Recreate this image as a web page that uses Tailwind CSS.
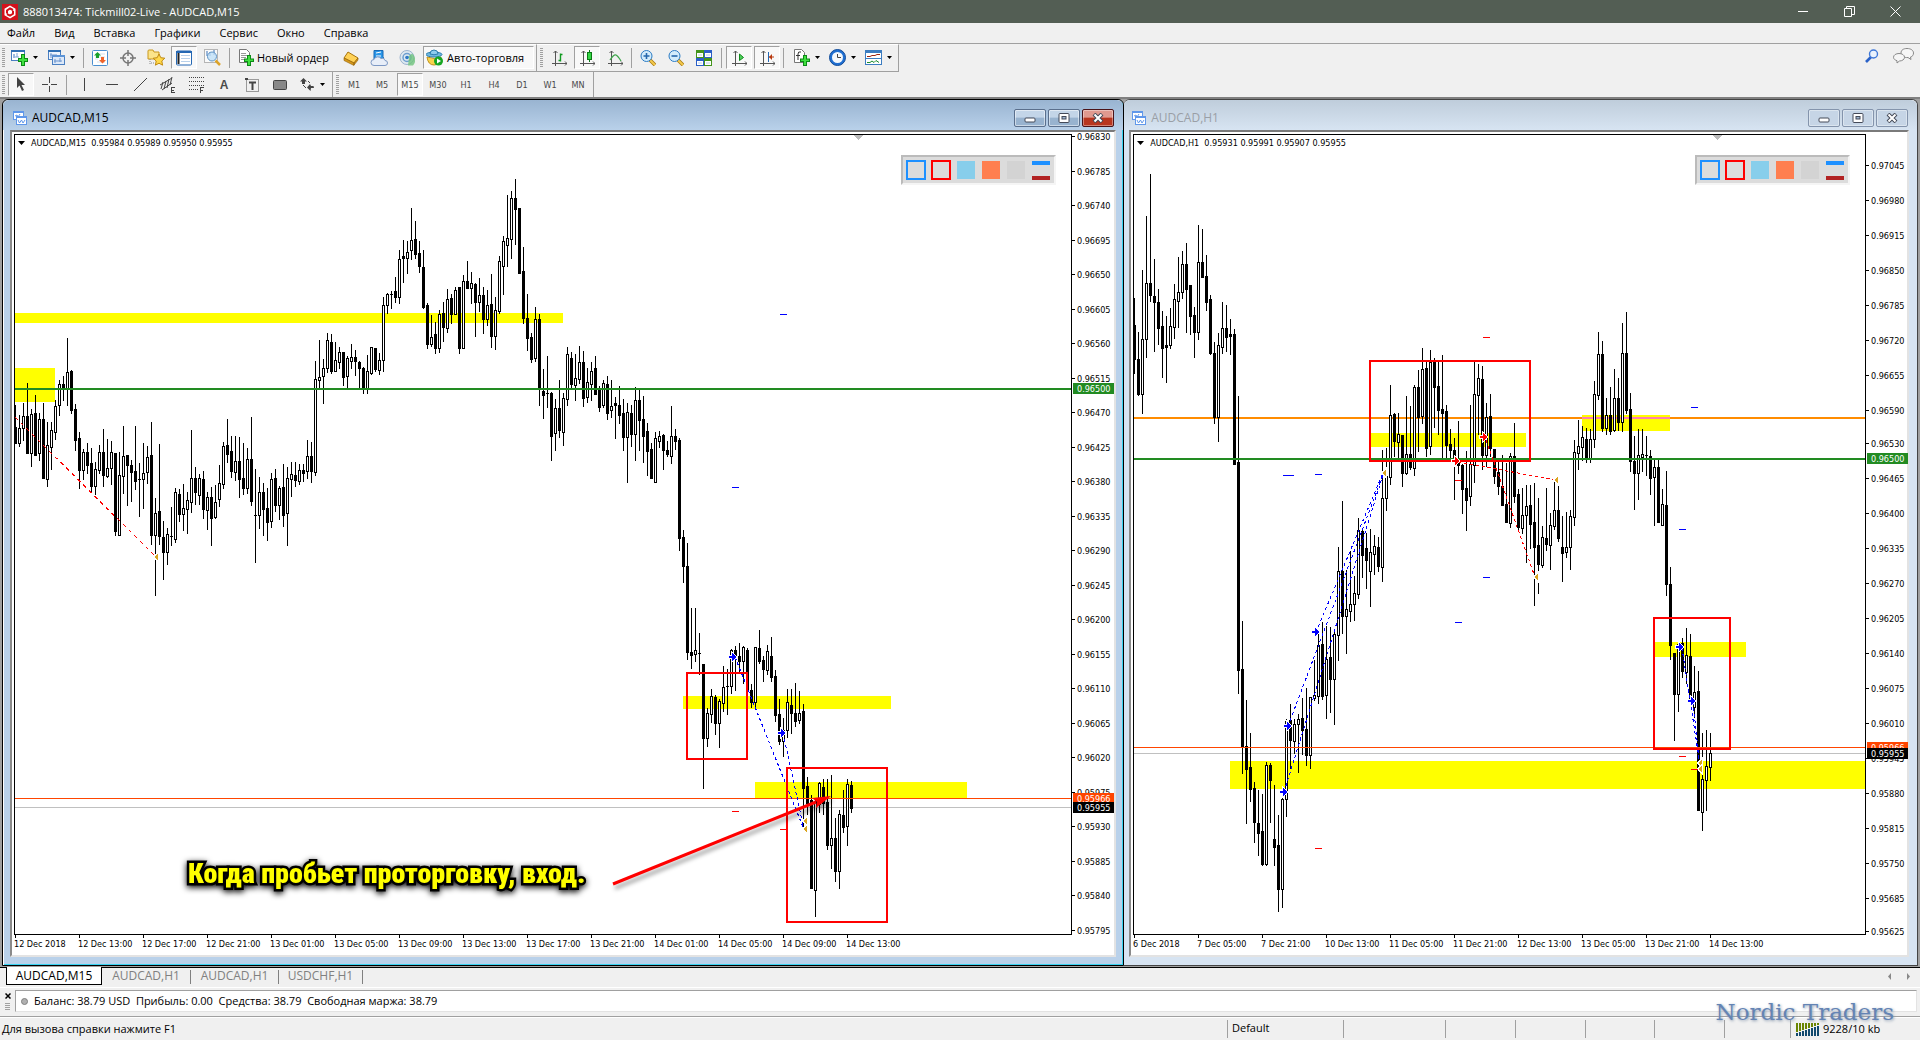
<!DOCTYPE html>
<html lang="ru">
<head>
  <meta charset="UTF-8" />
  <meta name="viewport" content="width=device-width, initial-scale=1.0"/>
  <title>888013474: Tickmill02-Live - AUDCAD,M15</title>
  <script src="https://cdn.jsdelivr.net/npm/@tailwindcss/browser@4"></script>
</head>
<body class="h-screen flex flex-col overflow-hidden bg-[#f0f0f0] text-black text-[12px] leading-4 font-['Open_Sans','Noto_Sans',sans-serif]">

  <!-- Title bar -->
  <header class="h-[23px] shrink-0 flex items-center bg-[#535e54] text-white pl-0.5 pr-0.5">
    <svg class="size-4" viewBox="0 0 16 16"><rect width="16" height="16" fill="#d4111b"/><path d="M8 1.500l5.500 3.200v6.600L8 14.500l-5.500-3.200V4.700z" fill="#fff"/><path d="M5 9.500V6.500L8 4.500l3 1.500M11 6.800v3L8 11.600l-3-1.500" fill="none" stroke="#d4111b" stroke-width="2"/></svg>
    <h1 class="ml-[5px] text-[11px]">888013474: Tickmill02-Live - AUDCAD,M15</h1>
    <div class="ml-auto flex h-full">
      <button aria-label="Minimize" class="w-[46px] flex items-center justify-center"><svg class="size-[11px]" viewBox="0 0 11 11"><path d="M0 5.500h10" stroke="#fff"/></svg></button>
      <button aria-label="Restore" class="w-[46px] flex items-center justify-center"><svg class="size-[11px]" viewBox="0 0 11 11" fill="none" stroke="#fff"><path d="M.5 2.500h7v8h-7zM2.500 2.500v-2h8v8h-3"/></svg></button>
      <button aria-label="Close" class="w-[46px] flex items-center justify-center"><svg class="size-[11px]" viewBox="0 0 11 11" stroke="#fff"><path d="M.5.5l10 10M10.500.5l-10 10"/></svg></button>
    </div>
  </header>

  <!-- Menu -->
  <nav class="h-5 shrink-0 flex items-center gap-[19px] pl-[7px] text-[11px]">
    <button>Файл</button>
    <button>Вид</button>
    <button>Вставка</button>
    <button>Графики</button>
    <button>Сервис</button>
    <button>Окно</button>
    <button>Справка</button>
  </nav>

  <!-- Main toolbar -->
  <div class="h-[29px] shrink-0 flex border-t border-[#a0a0a0] text-[11px]">
    <div class="flex items-center border-t border-b border-t-white border-b-[#a0a0a0] w-[537px] border-r border-r-[#a0a0a0] pl-0.5 pb-px">
      <i class="w-[3px] h-5 bg-[repeating-linear-gradient(#a0a0a0_0_1px,transparent_1px_2px)]"></i>
      <button aria-label="New chart" class="h-[23px] ml-[3px] px-[3px] flex items-center gap-[5px]">
        <svg class="w-[17px] h-[17px]" viewBox="0 0 17 17"><rect x=".5" y="1.500" width="13" height="10" fill="#fff" stroke="#4a7fc1"/><path d="M0 2h14" stroke="#2f6fb5" stroke-width="2"/><path d="M3 5v4M2 6h2M2 8h6M6 4v4" stroke="#7aa2d6"/><path d="M10 5h4v4h3v4h-3v4h-4v-4H7V9h3z" fill="#0c8a16"/><path d="M11 6h2v4h3v2h-3v4h-2v-4H8v-2h3z" fill="#3fe03f"/></svg>
        <svg class="w-[5px] h-[3px]" viewBox="0 0 5 3"><path d="M0 0h5L2.500 3z"/></svg>
      </button>
      <button aria-label="Profiles" class="h-[23px] ml-1 px-[3px] flex items-center gap-[5px]">
        <svg class="w-[17px] h-[17px]" viewBox="0 0 17 17"><rect x=".5" y="1.500" width="12" height="9" fill="#eef4fd" stroke="#4a7fc1"/><path d="M0 2h13" stroke="#2f6fb5" stroke-width="2"/><rect x="4.500" y="6.500" width="12" height="9" fill="#dce8f8" stroke="#4a7fc1"/><path d="M4 7h13" stroke="#5b93d6" stroke-width="2"/><path d="M3 4v5M2 6h7M7 10v4M6 12h8M12 9v4" stroke="#6a94cf"/></svg>
        <svg class="w-[5px] h-[3px]" viewBox="0 0 5 3"><path d="M0 0h5L2.500 3z"/></svg>
      </button>
      <i class="w-px h-5 bg-[#a0a0a0] ml-[5px] mr-[3px]"></i>
      <div class="flex gap-0.5">
        <button aria-label="Market watch" class="w-[26px] h-[23px] flex items-center justify-center"><svg class="size-4" viewBox="0 0 16 16"><rect x=".5" y=".5" width="15" height="15" rx="1" fill="#fff" stroke="#4a8fd0"/><path d="M3 4h10M3 7h10M5 12h8M3 9h3" stroke="#d5dfea"/><path d="M5.500 2L9 5.500H7V8H4V5.500H2z" fill="#16a02a"/><path d="M10.500 13.500L7 10h2V7h3v3h2z" fill="#f0642a"/></svg></button>
        <button aria-label="Data window" class="w-[26px] h-[23px] flex items-center justify-center"><svg class="size-4" viewBox="0 0 16 16" fill="none" stroke="#777" stroke-width="1.500"><circle cx="8" cy="8" r="5"/><path d="M8 0v6M8 10v6M0 8h6M10 8h6"/></svg></button>
        <button aria-label="Navigator" class="w-[26px] h-[23px] flex items-center justify-center"><svg class="w-[18px] h-[17px]" viewBox="0 0 18 17"><path d="M1 2q0-1 1-1h4l1 2h5v7H1z" fill="#fbe48a" stroke="#c9971c"/><path d="M3 10v6M4 14h4" stroke="#888" stroke-dasharray="1 1"/><path d="M12 5l1.800 3.700 4 .5-3 2.800.8 4.200-3.600-2-3.600 2 .8-4.200-3-2.800 4-.5z" fill="#ffd84a" stroke="#c08a10"/></svg></button>
        <button aria-label="Terminal" aria-pressed="true" class="w-[26px] h-[23px] flex items-center justify-center border border-t-[#a0a0a0] border-l-[#a0a0a0] border-b-white border-r-white bg-[#f8f8f8]"><svg class="size-4" viewBox="0 0 16 16"><rect x=".5" y="1" width="15" height="14" rx="1" fill="#fff" stroke="#2467b3"/><path d="M0 2h16" stroke="#2467b3" stroke-width="2"/><path d="M2.500 3v11" stroke="#222" stroke-width="2"/><path d="M5 5.500h9M5 8.500h9M5 11.500h9" stroke="#b8d0ea"/></svg></button>
        <button aria-label="Strategy tester" class="w-[26px] h-[23px] flex items-center justify-center"><svg class="w-[17px] h-[17px]" viewBox="0 0 17 17"><rect x=".5" y=".5" width="13" height="13" fill="#fafafa" stroke="#b5b5b5"/><path d="M3 2v5M6 3v4M10 1v5" stroke="#3a72b8"/><circle cx="8" cy="7.500" r="4.500" fill="#bfe0f7cc" stroke="#5f93c4"/><path d="M11.500 11.500l4.500 4.500" stroke="#dca32a" stroke-width="2.500"/></svg></button>
      </div>
      <i class="w-px h-5 bg-[#a0a0a0] ml-1"></i>
      <button class="h-[23px] w-[101px] ml-[5px] px-[3px] flex items-center gap-[3px] whitespace-nowrap">
        <svg class="w-[16px] h-[17px]" viewBox="0 0 16 17"><path d="M1.500.5h7l3 3v10h-10z" fill="#fff" stroke="#777"/><path d="M3 4.500h5M3 6.500h7M3 8.500h5M3 10.500h4" stroke="#999"/><path d="M9 6h4v3.500h3v3.500h-3v4H9v-4H6V9.500h3z" fill="#0c8a16"/><path d="M10 7h2v3.500h3V12h-3v4h-2v-4H7v-1.500h3z" fill="#3fe03f"/></svg>
        Новый ордер
      </button>
      <div class="flex gap-0.5 ml-0.5">
        <button aria-label="MetaEditor" class="w-[26px] h-[23px] flex items-center justify-center"><svg class="size-4" viewBox="0 0 16 16"><path d="M5 2l10 6-4 5L1 8z" fill="#ffd257" stroke="#a8740c"/><path d="M1 8l10 5v2.500L1 10.500zM11 13l4-5v2l-4 5z" fill="#d99a1a" stroke="#8f5f08" stroke-width=".6"/></svg></button>
        <button aria-label="VPS" class="w-[26px] h-[23px] flex items-center justify-center"><svg class="w-[18px] h-4" viewBox="0 0 18 16"><path d="M4 .5h9v6l1 3H4z" fill="#2a96e8" stroke="#1769b5"/><path d="M6 3l5-1M6 6h5" stroke="#fff"/><path d="M4 15.500a3 3 0 010-6 4 4 0 017-1 3 3 0 014 2 2.500 2.500 0 010 5z" fill="#e8eef8" stroke="#7d98c4"/></svg></button>
        <button aria-label="Signals" class="w-[26px] h-[23px] flex items-center justify-center"><svg class="size-4" viewBox="0 0 16 16" fill="none"><circle cx="8" cy="7.500" r="7" fill="#dfe9f0" stroke="#9ab3cf"/><circle cx="8" cy="7.500" r="4" stroke="#6d9fd0" stroke-width="1.500"/><path d="M8 7.500h2l-1 8h5a8 8 0 00-1-12" fill="#6fc37c" fill-opacity=".8"/><circle cx="8" cy="7.500" r="1.800" fill="#2d78c8"/></svg></button>
      </div>
      <button aria-pressed="true" class="h-[23px] w-[111px] ml-[3px] pl-0.5 flex items-center gap-[4px] whitespace-nowrap border border-t-[#a0a0a0] border-l-[#a0a0a0] border-b-white border-r-white bg-[#f8f8f8]">
        <svg class="w-[17px] h-[17px]" viewBox="0 0 17 17"><path d="M1 8q8 3 14 0-1 8-7 8T1 8z" fill="#f8d34c" stroke="#c09118"/><ellipse cx="8" cy="5.500" rx="8" ry="2.500" fill="#6fb7df" stroke="#2d7fae"/><path d="M4 5q0-4 4-4t4 4q-4 1.500-8 0z" fill="#8fcdee" stroke="#2d7fae"/><circle cx="12.500" cy="12" r="4.500" fill="#17a521"/><path d="M11 9.500v5l4-2.500z" fill="#fff"/></svg>
        Авто-торговля
      </button>
    </div>
    <div class="flex items-center border-t border-b border-t-white border-b-[#a0a0a0] w-[362px] border-r border-r-[#a0a0a0] pl-[3px] pb-px">
      <i class="w-[3px] h-5 bg-[repeating-linear-gradient(#a0a0a0_0_1px,transparent_1px_2px)]"></i>
      <div class="flex gap-0.5 ml-[3px]">
        <button aria-label="Bar chart" class="w-[26px] h-[23px] flex items-center justify-center"><svg class="w-[15px] h-4" viewBox="0 0 15 16" fill="none"><path d="M3.500 1v15M0 13.500h15M1.500 3l2-2 2 2M13 11.500l2 2-2 2" stroke="#555"/><path d="M8.500 11.500V3.500M6.500 10.500h2M8.500 4.500h2" stroke="#119a20" stroke-width="1.400"/></svg></button>
        <button aria-label="Candlesticks" aria-pressed="true" class="w-[26px] h-[23px] flex items-center justify-center border border-t-[#a0a0a0] border-l-[#a0a0a0] border-b-white border-r-white bg-[#f8f8f8]"><svg class="w-[15px] h-4" viewBox="0 0 15 16" fill="none"><path d="M3.500 1v15M0 13.500h15M1.500 3l2-2 2 2M13 11.500l2 2-2 2" stroke="#555"/><path d="M9.500 0v12" stroke="#0a7a14"/><rect x="7.500" y="2.500" width="4" height="7" fill="#35d545" stroke="#0a7a14"/></svg></button>
        <button aria-label="Line chart" class="w-[26px] h-[23px] flex items-center justify-center"><svg class="w-[15px] h-4" viewBox="0 0 15 16" fill="none"><path d="M3.500 1v15M0 13.500h15M1.500 3l2-2 2 2M13 11.500l2 2-2 2" stroke="#555"/><path d="M2 10q4-6 6-5t5 6" stroke="#3aa548" stroke-width="1.300"/></svg></button>
      </div>
      <i class="w-px h-5 bg-[#a0a0a0] mx-[3px]"></i>
      <div class="flex gap-0.5">
        <button aria-label="Zoom in" class="w-[26px] h-[23px] flex items-center justify-center"><svg class="size-4" viewBox="0 0 16 16" fill="none"><path d="M10 10l5 5" stroke="#a87a12" stroke-width="3.500"/><path d="M10 10l5 5" stroke="#f4c94c" stroke-width="2"/><circle cx="6.500" cy="6" r="5.500" fill="#d3ecfb" stroke="#2d7cc4"/><path d="M3.500 6h6M6.500 3v6" stroke="#2567ad" stroke-width="1.600"/></svg></button>
        <button aria-label="Zoom out" class="w-[26px] h-[23px] flex items-center justify-center"><svg class="size-4" viewBox="0 0 16 16" fill="none"><path d="M10 10l5 5" stroke="#a87a12" stroke-width="3.500"/><path d="M10 10l5 5" stroke="#f4c94c" stroke-width="2"/><circle cx="6.500" cy="6" r="5.500" fill="#d3ecfb" stroke="#2d7cc4"/><path d="M3.500 6h6" stroke="#2567ad" stroke-width="1.600"/></svg></button>
        <button aria-label="Tile windows" class="w-[26px] h-[23px] flex items-center justify-center"><svg class="size-4" viewBox="0 0 16 16"><path d="M0 0h8v8H0zM8 8h8v8H8z" fill="#43941b"/><path d="M8 0h8v8H8zM0 8h8v8H0z" fill="#2a5fc8"/><path d="M1 3h6v4H1zM9 3h6v4H9zM1 11h6v4H1zM9 11h6v4H9z" fill="#fff"/><path d="M2 5h4M10 5h4M2 13h4M10 13h4" stroke="#b9cfe6"/></svg></button>
      </div>
      <i class="w-px h-5 bg-[#a0a0a0] mx-1"></i>
      <div class="flex gap-0.5">
        <button aria-label="Auto scroll" aria-pressed="true" class="w-[26px] h-[23px] flex items-center justify-center border border-t-[#a0a0a0] border-l-[#a0a0a0] border-b-white border-r-white bg-[#f8f8f8]"><svg class="w-[15px] h-4" viewBox="0 0 15 16" fill="none"><path d="M3.500 1v15M0 13.500h15M1.500 3l2-2 2 2M13 11.500l2 2-2 2" stroke="#555"/><path d="M7.500 4l4 3.500-4 3z" fill="#4fd05c" stroke="#118a1c"/></svg></button>
        <button aria-label="Chart shift" aria-pressed="true" class="w-[26px] h-[23px] flex items-center justify-center border border-t-[#a0a0a0] border-l-[#a0a0a0] border-b-white border-r-white bg-[#f8f8f8]"><svg class="w-[15px] h-4" viewBox="0 0 15 16" fill="none"><path d="M3.500 1v15M0 13.500h15M1.500 3l2-2 2 2M13 11.500l2 2-2 2" stroke="#555"/><path d="M8.500 2v10" stroke="#2467b3"/><path d="M9 7h5" stroke="#b83a10"/><path d="M9 7l3-3v6z" fill="#b83a10"/></svg></button>
      </div>
      <i class="w-px h-5 bg-[#a0a0a0] ml-[3px] mr-[6px]"></i>
      <div class="flex gap-[3px]">
        <button aria-label="Indicators" class="h-[23px] px-[3px] flex items-center gap-[5px]">
          <svg class="w-[17px] h-[17px]" viewBox="0 0 17 17"><path d="M1.500.5h7l3 3v10h-10z" fill="#fff" stroke="#777"/><path d="M8 3q-3-1-3 2v6M3 6.500h4" fill="none" stroke="#333"/><path d="M10 6h4v3.500h3v3.500h-3v4h-4v-4H7V9.500h3z" fill="#0c8a16"/><path d="M11 7h2v3.500h3V12h-3v4h-2v-4H8v-1.500h3z" fill="#3fe03f"/></svg>
          <svg class="w-[5px] h-[3px]" viewBox="0 0 5 3"><path d="M0 0h5L2.500 3z"/></svg>
        </button>
        <button aria-label="Periods" class="h-[23px] px-[3px] flex items-center gap-[5px]">
          <svg class="w-[17px] h-[17px]" viewBox="0 0 17 17"><circle cx="8.500" cy="8.500" r="8" fill="#1f6fd2" stroke="#134c98"/><circle cx="8.500" cy="8.500" r="5.500" fill="#f4f8fc"/><path d="M8.500 5v3.500H12" fill="none" stroke="#444"/></svg>
          <svg class="w-[5px] h-[3px]" viewBox="0 0 5 3"><path d="M0 0h5L2.500 3z"/></svg>
        </button>
        <button aria-label="Templates" class="h-[23px] px-[3px] flex items-center gap-[5px]">
          <svg class="w-[17px] h-[15px]" viewBox="0 0 17 15"><rect x=".5" y=".5" width="16" height="14" fill="#fff" stroke="#3b7cc0"/><path d="M0 1.500h17" stroke="#3b7cc0" stroke-width="3"/><path d="M1 8.500h15" stroke="#3b7cc0"/><path d="M2 6.500h3l2-1h3l2-1h3" fill="none" stroke="#9b2412"/><path d="M2 12.500h3l2-1.500 2 1.500 2-2 3 2" fill="none" stroke="#1c8c2c"/></svg>
          <svg class="w-[5px] h-[3px]" viewBox="0 0 5 3"><path d="M0 0h5L2.500 3z"/></svg>
        </button>
      </div>
    </div>
    <div class="ml-auto mr-[6px] flex items-center gap-[14px] pb-1">
      <button aria-label="Search"><svg class="size-[14px]" viewBox="0 0 14 14" fill="none"><path d="M6 8l-5 5" stroke="#2a62c8" stroke-width="2.600"/><circle cx="8.500" cy="5" r="4" fill="#eaf2fd" stroke="#3f78d8" stroke-width="1.400"/></svg></button>
      <button aria-label="Chat"><svg class="w-[21px] h-4" viewBox="0 0 21 16" fill="#f6f6f6" stroke="#888"><path d="M14 .5c4 0 6.500 2 6.500 4.500 0 2-1 3.500-3 4l.5 2.500-3-2c-4 .4-7-1.500-7-4.500S10.500.5 14 .5z"/><path d="M6 5.500c3 0 5.500 1.500 5.500 3.800S9 13 6.500 13L4 15v-2.300C2 12 .5 11 .5 9.300.5 7 3 5.500 6 5.500z"/></svg></button>
    </div>
  </div>

  <!-- Drawing and timeframe toolbar -->
  <div class="h-[25px] shrink-0 flex text-[#4a4a4a]">
    <div class="flex items-center w-[333px] border-r border-[#a0a0a0] pl-0.5">
      <i class="w-[3px] h-5 bg-[repeating-linear-gradient(#a0a0a0_0_1px,transparent_1px_2px)]"></i>
      <div class="flex gap-0.5 ml-[3px]">
        <button aria-label="Cursor" aria-pressed="true" class="w-[26px] h-[23px] flex items-center justify-center border border-t-[#a0a0a0] border-l-[#a0a0a0] border-b-white border-r-white bg-[#f8f8f8]"><svg class="w-[10px] h-[15px]" viewBox="0 0 10 15"><path d="M1 0v11l2.500-2.500L6 14l2-1-2.500-5H9z" fill="#444"/></svg></button>
        <button aria-label="Crosshair" class="w-[26px] h-[23px] flex items-center justify-center"><svg class="size-[15px]" viewBox="0 0 15 15"><path d="M7.500 0v6M7.500 9v6M0 7.500h6M9 7.500h6" stroke="#444"/></svg></button>
      </div>
      <i class="w-px h-5 bg-[#a0a0a0] mx-1"></i>
      <div class="flex gap-0.5">
        <button aria-label="Vertical line" class="w-[26px] h-[23px] flex items-center justify-center"><svg class="size-[13px]" viewBox="0 0 13 13"><path d="M6.500 0v13" stroke="#444"/></svg></button>
        <button aria-label="Horizontal line" class="w-[26px] h-[23px] flex items-center justify-center"><svg class="size-[13px]" viewBox="0 0 13 13"><path d="M0 6.500h12" stroke="#444"/></svg></button>
        <button aria-label="Trendline" class="w-[26px] h-[23px] flex items-center justify-center"><svg class="size-[13px]" viewBox="0 0 13 13"><path d="M0 13L13 0" stroke="#444"/></svg></button>
        <button aria-label="Equidistant channel" class="w-[26px] h-[23px] flex items-center justify-center"><svg class="size-4" viewBox="0 0 16 16" fill="none" stroke="#444"><path d="M0 8L12 1M2 13l10-7M3 5L1 12M6 4L4 12M9 2L7 11M12 0l-2 8"/><path d="M11.500 10v6M11 10.500h4M11 13.500h3M11 15.500h4"/></svg></button>
        <button aria-label="Fibonacci" class="w-[26px] h-[23px] flex items-center justify-center"><svg class="w-[15px] h-4" viewBox="0 0 15 16" fill="none" stroke="#444"><path d="M0 .5h15M0 4.500h15M0 8.500h15M0 12.500h9" stroke-dasharray="1 1"/><path d="M11.500 10v6M11 10.500h4M11 13.500h3"/></svg></button>
        <button class="w-[26px] h-[23px] flex items-center justify-center font-bold font-['Liberation_Sans',sans-serif]">A</button>
        <button aria-label="Text label" class="w-[26px] h-[23px] flex items-center justify-center"><svg class="size-[14px]" viewBox="0 0 14 14" fill="none" stroke="#444"><path d="M1.500 1.500h12v12h-12z" stroke-dasharray="1 1"/><path d="M0 1h3" stroke-width="2"/><path d="M4 4.500h7M7.500 4v8" stroke-width="2"/></svg></button>
        <button aria-label="Shape" class="w-[26px] h-[23px] flex items-center justify-center"><svg class="w-[14px] h-[10px]" viewBox="0 0 14 10"><rect x=".5" y=".5" width="13" height="9" rx="1" fill="#888" stroke="#444"/></svg></button>
        <button aria-label="Arrows" class="h-[23px] px-[3px] ml-0.5 flex items-center gap-[6px]">
          <svg class="w-[14px] h-[13px]" viewBox="0 0 14 13" fill="#444"><path d="M3.500 0L7 3.500H5V6H2V3.500H0zM7 9.500l3-3.500 1 2h2.500l.5 2h-3l-.5 3z"/><path d="M3 7l3 3M8 3l2 2" stroke="#444"/></svg>
          <svg class="w-[5px] h-[3px]" viewBox="0 0 5 3"><path d="M0 0h5L2.500 3z"/></svg>
        </button>
      </div>
    </div>
    <div class="flex items-center w-[261px] border-r border-[#a0a0a0] pl-[3px] text-[9px] font-['DejaVu_Sans_Condensed','DejaVu_Sans',sans-serif]">
      <i class="w-[3px] h-5 bg-[repeating-linear-gradient(#a0a0a0_0_1px,transparent_1px_2px)]"></i>
      <div class="flex gap-0.5 ml-0.5">
        <button class="w-[26px] h-[23px]">M1</button>
        <button class="w-[26px] h-[23px]">M5</button>
        <button aria-pressed="true" class="w-[26px] h-[23px] border border-t-[#a0a0a0] border-l-[#a0a0a0] border-b-white border-r-white bg-[#f8f8f8]">M15</button>
        <button class="w-[26px] h-[23px]">M30</button>
        <button class="w-[26px] h-[23px]">H1</button>
        <button class="w-[26px] h-[23px]">H4</button>
        <button class="w-[26px] h-[23px]">D1</button>
        <button class="w-[26px] h-[23px]">W1</button>
        <button class="w-[26px] h-[23px]">MN</button>
      </div>
    </div>
  </div>

  <!-- Chart windows -->
  <main class="flex-1 min-h-0 flex border-t-2 border-t-[#808080] border-b border-b-black bg-[#a0a0a0] pl-0.5 pr-0.5 pb-px">
    <section class="flex-[1122] min-w-0 flex flex-col rounded-t-md border border-black bg-[#b9d1ea] shadow-[inset_1px_1px_#fff,inset_-1px_-1px_#37d3f2]">
      <div class="h-[30px] shrink-0 flex items-center pl-[10px] pr-[9px] pt-[6px] rounded-t-md bg-linear-to-b from-[#99b4d1] to-[#b9d1ea]">
        <svg class="size-[14px]" viewBox="0 0 14 14"><rect x=".5" y=".5" width="10" height="8" fill="#fff" stroke="#5f97ea"/><path d="M0 1h11" stroke="#5f97ea" stroke-width="2"/><path d="M2 5l2-1 1 2 2-3" fill="none" stroke="#5f97ea"/><rect x="3.500" y="5.500" width="10" height="8" fill="#fff" stroke="#5f97ea"/><path d="M3 6h11" stroke="#5f97ea" stroke-width="2"/><path d="M5 9l1.500 3 2-3 1.500 3 2-3" fill="none" stroke="#5f97ea"/></svg>
        <h2 class="ml-[5px]">AUDCAD,M15</h2>
        <div class="ml-auto flex gap-0.5">
          <button aria-label="Minimize chart" class="w-8 h-[18px] flex items-center justify-center rounded-xs border border-[#5a6f8c] bg-linear-to-b from-[#c3d5e8] from-45% to-[#98b3cf] to-50% shadow-[inset_0_0_0_1px_#ffffff80]"><svg class="w-[12px] h-[10px]" viewBox="0 0 12 10"><rect x="1" y="5" width="10" height="4" rx="1" fill="#fff" stroke="#444a58"/></svg></button>
          <button aria-label="Restore chart" class="w-8 h-[18px] flex items-center justify-center rounded-xs border border-[#5a6f8c] bg-linear-to-b from-[#c3d5e8] from-45% to-[#98b3cf] to-50% shadow-[inset_0_0_0_1px_#ffffff80]"><svg class="w-[12px] h-[10px]" viewBox="0 0 12 10"><rect x="1" y=".5" width="10" height="9" rx="1" fill="#fff" stroke="#444a58"/><rect x="4" y="3.500" width="4" height="2.500" fill="#9db4cf" stroke="#444a58"/></svg></button>
          <button aria-label="Close chart" class="w-8 h-[18px] flex items-center justify-center rounded-xs border border-[#4a1218] bg-linear-to-b from-[#e0998f] from-45% to-[#b8351f] to-50% shadow-[inset_0_0_0_1px_#ffffff60]"><svg class="w-[12px] h-[10px]" viewBox="0 0 12 10" fill="none"><path d="M2 1l8 8M10 1L2 9" stroke="#444a58" stroke-width="4"/><path d="M2.500 1.500l7 7M9.500 1.500l-7 7" stroke="#fff" stroke-width="2"/></svg></button>
        </div>
      </div>
      <div class="flex-1 min-h-0 flex ml-[7px] mr-[7px] mb-2 border-2 border-t-[#7a7a7a] border-l-[#8a8a8a] border-r-[#e3e3e3] border-b-[#e3e3e3] bg-white pt-0.5 pl-0.5">
        <div class="flex-1 min-w-0 flex flex-col">
          <div class="relative flex-1 min-h-0 border border-black">
            <svg id="plotM15" class="block w-full h-full" shape-rendering="crispEdges"></svg>
            <div class="absolute top-0 left-[3px] flex items-center gap-[6px] h-3 mt-0.5 text-[9px] whitespace-pre font-['DejaVu_Sans_Condensed','DejaVu_Sans',sans-serif]"><svg class="w-[7px] h-1" viewBox="0 0 7 4"><path d="M0 0h7L3.500 4z"/></svg><span>AUDCAD,M15  0.95984 0.95989 0.95950 0.95955</span></div>
            <div class="absolute top-5 right-[15px] h-[30px] w-[155px] flex items-start gap-[5px] pl-[3px] pt-[3px] bg-[#dcdcdc] border-2 border-t-[#bbb] border-l-[#bbb] border-r-[#f5f5f5] border-b-[#f5f5f5]">
              <i class="size-5 border-2 border-[#1e90ff]"></i><i class="size-5 border-2 border-[#f00]"></i><i class="size-5 border border-[#dcdcdc] bg-[#87ceeb]"></i><i class="size-5 border border-[#dcdcdc] bg-[#ff7f50]"></i><i class="size-5 border border-[#dcdcdc] bg-[#d3d3d3]"></i><i class="w-[18px] h-[19px] ml-px mt-px border-t-4 border-b-4 border-t-[#1e90ff] border-b-[#b22222]"></i>
            </div>
            <p class="absolute left-[173px] top-[723px] text-[28px] leading-8 font-black whitespace-nowrap text-[#ff0] font-['Roboto_Condensed','Roboto',sans-serif] [-webkit-text-stroke:5px_#000] [paint-order:stroke_fill] drop-shadow-[0_2px_3px_#000]">Когда пробьет проторговку, вход.</p>
          </div>
          <svg id="timeM15" class="block w-full h-5 shrink-0" shape-rendering="crispEdges"></svg>
        </div>
        <svg id="priceM15" class="block w-[42px] shrink-0 h-full overflow-visible" shape-rendering="crispEdges"></svg>
      </div>
    </section>

    <section class="flex-[794] min-w-0 flex flex-col rounded-t-md border border-l-0 border-[#444] bg-[#d7e4f2] shadow-[inset_0_1px_#fff]">
      <div class="h-[30px] shrink-0 flex items-center pl-2 pr-[9px] pt-[6px] rounded-t-md bg-linear-to-b from-[#bfcddb] to-[#d7e4f2]">
        <svg class="size-[14px]" viewBox="0 0 14 14"><rect x=".5" y=".5" width="10" height="8" fill="#fff" stroke="#5f97ea"/><path d="M0 1h11" stroke="#5f97ea" stroke-width="2"/><path d="M2 5l2-1 1 2 2-3" fill="none" stroke="#5f97ea"/><rect x="3.500" y="5.500" width="10" height="8" fill="#fff" stroke="#5f97ea"/><path d="M3 6h11" stroke="#5f97ea" stroke-width="2"/><path d="M5 9l1.500 3 2-3 1.500 3 2-3" fill="none" stroke="#5f97ea"/></svg>
        <h2 class="ml-[5px] text-[#9a9fa6]">AUDCAD,H1</h2>
        <div class="ml-auto flex gap-0.5">
          <button aria-label="Minimize chart" class="w-8 h-[18px] flex items-center justify-center rounded-xs border border-[#8494ac] bg-[#c6d5e6] shadow-[inset_0_0_0_1px_#ffffff60]"><svg class="w-[12px] h-[10px]" viewBox="0 0 12 10"><rect x="1" y="5" width="10" height="4" rx="1" fill="#fff" stroke="#444a58"/></svg></button>
          <button aria-label="Restore chart" class="w-8 h-[18px] flex items-center justify-center rounded-xs border border-[#8494ac] bg-[#c6d5e6] shadow-[inset_0_0_0_1px_#ffffff60]"><svg class="w-[12px] h-[10px]" viewBox="0 0 12 10"><rect x="1" y=".5" width="10" height="9" rx="1" fill="#fff" stroke="#444a58"/><rect x="4" y="3.500" width="4" height="2.500" fill="#9db4cf" stroke="#444a58"/></svg></button>
          <button aria-label="Close chart" class="w-8 h-[18px] flex items-center justify-center rounded-xs border border-[#8494ac] bg-[#c6d5e6] shadow-[inset_0_0_0_1px_#ffffff60]"><svg class="w-[12px] h-[10px]" viewBox="0 0 12 10" fill="none"><path d="M2 1l8 8M10 1L2 9" stroke="#444a58" stroke-width="4"/><path d="M2.500 1.500l7 7M9.500 1.500l-7 7" stroke="#fff" stroke-width="2"/></svg></button>
        </div>
      </div>
      <div class="flex-1 min-h-0 flex ml-[5px] mr-2 mb-2 border-2 border-t-[#7a7a7a] border-l-[#8a8a8a] border-r-[#e3e3e3] border-b-[#e3e3e3] bg-white pt-0.5 pl-0.5">
        <div class="flex-1 min-w-0 flex flex-col">
          <div class="relative flex-1 min-h-0 border border-black">
            <svg id="plotH1" class="block w-full h-full" shape-rendering="crispEdges"></svg>
            <div class="absolute top-0 left-[3px] flex items-center gap-[6px] h-3 mt-0.5 text-[9px] whitespace-pre font-['DejaVu_Sans_Condensed','DejaVu_Sans',sans-serif]"><svg class="w-[7px] h-1" viewBox="0 0 7 4"><path d="M0 0h7L3.500 4z"/></svg><span>AUDCAD,H1  0.95931 0.95991 0.95907 0.95955</span></div>
            <div class="absolute top-5 right-[15px] h-[30px] w-[155px] flex items-start gap-[5px] pl-[3px] pt-[3px] bg-[#dcdcdc] border-2 border-t-[#bbb] border-l-[#bbb] border-r-[#f5f5f5] border-b-[#f5f5f5]">
              <i class="size-5 border-2 border-[#1e90ff]"></i><i class="size-5 border-2 border-[#f00]"></i><i class="size-5 border border-[#dcdcdc] bg-[#87ceeb]"></i><i class="size-5 border border-[#dcdcdc] bg-[#ff7f50]"></i><i class="size-5 border border-[#dcdcdc] bg-[#d3d3d3]"></i><i class="w-[18px] h-[19px] ml-px mt-px border-t-4 border-b-4 border-t-[#1e90ff] border-b-[#b22222]"></i>
            </div>
          </div>
          <svg id="timeH1" class="block w-full h-5 shrink-0" shape-rendering="crispEdges"></svg>
        </div>
        <svg id="priceH1" class="block w-[41px] shrink-0 h-full overflow-visible" shape-rendering="crispEdges"></svg>
      </div>
    </section>
  </main>

  <!-- Chart tabs -->
  <nav class="h-5 shrink-0 flex items-start text-[#808080] border-b border-white">
    <button class="ml-[6px] w-[96px] h-[18px] -mt-px bg-white text-black border border-t-0 border-black">AUDCAD,M15</button>
    <button class="w-[88px] h-4">AUDCAD,H1</button>
    <i class="w-px h-[14px] mt-0.5 bg-[#808080]"></i>
    <button class="w-[87px] h-4">AUDCAD,H1</button>
    <i class="w-px h-[14px] mt-0.5 bg-[#808080]"></i>
    <button class="w-[83px] h-4">USDCHF,H1</button>
    <i class="w-px h-[14px] mt-0.5 bg-[#808080]"></i>
    <div class="ml-auto mr-[10px] mt-[5px] flex gap-4">
      <button aria-label="Scroll left"><svg class="block w-[3px] h-[7px]" viewBox="0 0 3 7"><path d="M3 0v7L0 3.500z" fill="#888"/></svg></button>
      <button aria-label="Scroll right"><svg class="block w-[3px] h-[7px]" viewBox="0 0 3 7"><path d="M0 0v7l3-3.500z" fill="#888"/></svg></button>
    </div>
  </nav>

  <!-- Account line -->
  <div class="h-[29px] shrink-0 flex border-b border-[#a0a0a0] pt-0.5 pb-1">
    <div class="w-[15px] flex flex-col items-center gap-1 pt-[3px]">
      <button aria-label="Close panel"><svg class="block size-[6px]" viewBox="0 0 6 6"><path d="M.5.5l5 5M5.500.5l-5 5" stroke="#000" stroke-width="1.500"/></svg></button>
      <i class="w-[5px] h-[8px] bg-[repeating-linear-gradient(#a0a0a0_0_1px,transparent_1px_2px)]"></i>
    </div>
    <p class="flex-1 mr-[3px] flex items-center gap-[6px] pl-[5px] bg-white border border-t-[#a0a0a0] border-l-[#a0a0a0] border-[#e3e3e3] whitespace-pre"><i class="size-[7px] rounded-full bg-[#b0b0b0] border border-[#808080]"></i><span class="text-[11px]">Баланс: 38.79 USD  Прибыль: 0.00  Средства: 38.79  Свободная маржа: 38.79</span></p>
  </div>

  <!-- Status bar -->
  <footer class="relative h-[23px] shrink-0 flex items-center border-t border-white pl-0.5 text-[11px]">
    <span class="flex-1">Для вызова справки нажмите F1</span>
    <span class="w-[116px] h-[18px] border-l border-[#a0a0a0] pl-1">Default</span>
    <span class="w-[102px] h-[18px] border-l border-[#a0a0a0]"></span>
    <span class="w-[70px] h-[18px] border-l border-[#a0a0a0]"></span>
    <span class="w-[70px] h-[18px] border-l border-[#a0a0a0]"></span>
    <span class="w-[69px] h-[18px] border-l border-[#a0a0a0]"></span>
    <span class="w-[70px] h-[18px] border-l border-[#a0a0a0]"></span>
    <span class="w-[66px] h-[18px] border-l border-[#a0a0a0]"></span>
    <span class="w-[130px] h-[18px] border-l border-[#a0a0a0] pl-[5px] flex items-center gap-1">
      <svg class="w-[23px] h-[13px]" viewBox="0 0 23 13" shape-rendering="crispEdges"><path d="M0 0h2v9H0zM3 0h2v8H3zM6 0h2v7H6zM9 0h2v6H9zM12 0h2v5h-2zM15 0h2v4h-2zM18 0h2v3h-2zM21 0h2v2h-2z" fill="#6b8500"/><path d="M0 10h2v3H0zM3 9h2v4H3zM6 8h2v5H6zM9 7h2v6H9zM12 6h2v7h-2zM15 5h2v8h-2zM18 4h2v9h-2zM21 3h2v10h-2z" fill="#124a6e"/></svg>
      9228/10 kb
    </span>
    <strong class="absolute right-[26px] -top-5 text-[23px] leading-7 font-normal text-[#6484b4] whitespace-nowrap font-['DejaVu_Serif',serif] [text-shadow:1px_1px_3px_#8a9ab0]">Nordic Traders</strong>
  </footer>

  <script>
    // One candle per entry: high, body top, body bottom, low (in pixels), "u" marks a rising candle
    const candlesM15 = `405 427 443 443,415 428 443 446 u,403 416 428 440 u,383 416 453 453,409 414 453 466 u,395 413 455 455,
      413 419 453 460 u,403 419 478 478,422 445 479 486 u,422 430 447 469 u,400 406 432 439 u,380 384 405 415 u,
      376 384 388 400,338 372 389 405 u,370 371 410 413,404 409 440 450,432 438 470 488,449 452 470 479 u,
      443 452 465 473,448 463 486 491,462 469 486 494 u,445 452 470 473 u,429 452 475 486,439 468 476 477 u,
      441 452 468 484 u,453 453 531 535,452 475 535 535 u,426 456 476 493 u,455 455 465 505,460 465 472 501,
      426 471 481 489,463 479 479 516,443 473 479 508 u,446 457 472 483 u,422 455 535 544,498 513 535 595 u,
      444 511 536 544,521 537 552 579,528 534 552 564 u,507 536 536 545,488 492 539 542 u,489 494 514 521,
      484 508 514 530 u,492 500 509 533 u,430 478 502 512 u,467 478 492 504,474 478 495 504 u,471 479 509 518,
      492 497 510 529 u,487 497 518 545,485 502 517 518 u,465 483 499 506 u,442 446 484 488 u,419 445 454 462,
      436 451 471 477,436 461 472 480 u,437 461 479 497,443 478 488 494,448 459 488 493 u,417 459 501 505,
      469 515 515 562,477 492 515 528 u,483 492 509 535,488 508 522 540,473 479 521 527 u,469 478 505 511,
      486 488 505 519 u,464 487 515 526,467 478 513 545 u,462 474 479 496 u,462 475 480 486,464 470 481 484 u,
      464 470 473 481,440 456 471 478 u,442 456 471 482,361 379 472 475 u,340 377 380 388 u,359 368 376 403 u,
      333 340 368 372 u,334 342 371 373,342 360 371 371 u,347 352 362 368 u,352 352 377 385,356 358 376 388 u,
      344 357 361 368 u,350 357 361 375,361 362 368 388,367 368 389 393,355 371 389 393 u,347 347 373 374 u,
      348 348 369 371,353 360 370 374 u,297 305 360 371 u,293 294 305 313 u,291 294 294 308,277 291 297 302,
      250 259 297 303 u,240 256 258 282,241 252 258 273 u,208 240 250 259 u,221 239 254 258,241 253 266 272,
      250 267 307 308,303 305 344 348,315 337 344 346 u,322 334 348 353,310 314 348 352 u,302 313 327 341,
      289 299 328 332 u,294 298 314 323,287 290 314 314 u,287 287 348 353,275 281 348 348 u,261 281 288 288,
      272 283 288 303 u,283 284 302 336,278 295 302 311 u,287 295 319 333,290 305 319 325 u,274 304 336 347,
      297 310 336 349 u,256 261 311 313 u,236 241 266 294 u,195 238 245 266 u,191 198 239 258 u,179 198 209 244,
      208 208 273 273,247 271 318 323,294 318 338 350,333 337 359 362,307 319 358 361 u,314 319 389 405,
      369 391 395 418,356 393 393 407,392 393 436 460,399 408 433 450 u,380 408 430 437,393 398 432 445 u,
      347 354 399 405 u,352 358 384 388,354 378 385 400 u,346 362 379 383 u,351 362 398 406,368 382 397 402 u,
      362 371 384 400 u,356 368 394 394,386 389 407 411,380 383 405 407 u,376 384 413 419,380 406 410 417 u,
      397 403 405 438,386 405 415 423,399 413 437 450,403 412 437 482 u,405 413 434 446,387 400 434 460 u,
      390 400 420 450,396 419 436 462,423 431 451 475,443 449 478 478,432 438 482 482 u,431 436 441 447 u,
      434 435 450 469,441 450 454 456,406 436 456 463 u,429 436 441 449,438 440 538 550,530 537 566 582,
      543 566 652 659,608 652 655 668,608 650 654 661 u,633 653 653 674,664 664 738 788,708 713 738 746 u,
      689 696 714 722 u,695 697 723 734,699 701 723 747 u,666 687 703 711 u,669 686 686 714,649 650 686 693 u,
      646 650 656 690,643 656 661 673,646 647 661 683 u,648 650 690 690,684 690 702 707,647 647 702 707 u,
      630 648 661 663,656 660 669 681,645 651 670 674 u,637 656 677 681,670 676 715 721,699 714 741 744,
      718 730 741 756 u,689 702 730 737 u,689 705 713 733,683 713 721 726,691 713 720 723 u,704 711 788 826,
      777 786 803 817,795 800 888 888,799 801 890 916 u,782 783 804 812 u,779 787 803 814,779 802 845 849,
      775 838 845 868 u,818 838 871 881,810 814 871 888 u,790 815 827 832,779 784 826 845 u,781 785 808 812`;

    const candlesH1 = `298 325 359 373,332 359 394 395,270 339 394 413 u,216 283 339 357 u,174 283 295 301,259 296 302 351,
      289 302 328 344,311 326 348 377,316 345 347 382,308 326 345 348 u,284 299 327 338 u,257 292 301 327 u,
      251 264 292 298 u,243 264 289 332,285 285 316 334,307 315 332 357,225 262 332 339 u,229 262 277 277,
      255 276 302 310,295 299 353 354,342 353 417 423,333 345 417 441 u,302 328 347 353 u,305 328 337 351,
      319 334 336 354,329 334 464 464,396 462 670 693,621 669 747 773,700 746 769 823,733 767 789 801,
      782 788 822 842,790 823 833 855,794 831 864 865,762 765 864 865 u,763 765 780 822,785 839 847 865,
      815 845 889 911,797 799 889 907 u,719 721 799 816 u,704 720 740 768,719 724 741 753 u,714 719 724 772 u,
      698 718 730 754,688 729 755 765,697 697 755 768 u,660 695 698 700 u,634 645 696 703 u,622 644 696 699,
      626 659 695 718 u,627 657 679 712,632 634 679 724 u,547 571 635 660 u,501 571 616 633,570 609 616 653 u,
      551 604 611 621 u,576 593 604 620 u,518 530 594 598 u,529 531 555 577,533 548 560 588,529 552 571 606 u,
      535 546 554 574 u,537 547 566 571,450 498 567 581 u,448 476 498 510 u,385 415 477 484 u,413 414 441 456,
      413 434 442 461 u,435 435 473 486,396 454 473 474 u,406 454 467 469,385 387 468 475 u,370 387 417 451,
      348 369 416 423 u,362 368 448 456,350 362 446 454 u,358 361 387 427,361 386 410 434,355 409 413 458,
      405 411 445 460,429 444 450 460,438 450 460 499,421 460 465 473,464 465 489 513,451 488 500 530,
      405 464 496 505 u,362 394 465 482 u,364 378 395 434 u,366 379 455 469,403 417 455 466 u,394 416 448 456,
      449 449 476 483,462 472 486 494,455 486 505 505,463 504 522 522,453 456 523 527 u,423 456 496 502,
      489 494 527 531,488 515 528 533 u,485 506 515 562 u,485 505 524 548,483 522 547 605,498 545 564 593,
      526 537 565 567 u,488 538 544 550,513 525 545 569 u,482 510 526 529 u,485 510 538 541,516 547 553 581,
      512 547 552 557 u,510 516 547 569 u,440 452 517 525 u,420 446 453 469 u,426 437 447 460 u,428 439 459 462,
      429 439 459 462 u,381 394 439 447 u,332 354 395 399 u,341 354 428 431,398 415 428 434 u,387 415 431 434,
      369 398 430 431 u,378 398 422 430,323 353 422 431 u,312 353 410 413,393 409 461 471,436 461 473 509,
      429 455 473 499 u,429 454 457 471 u,436 455 455 475,450 456 478 494,460 467 477 525 u,460 467 522 522,
      489 504 525 525 u,471 505 584 595,567 584 645 659,653 653 694 740,642 644 694 711 u,638 643 671 677,
      628 655 672 683 u,634 656 702 706,666 692 707 717 u,671 691 810 810,733 779 812 830 u,730 766 780 810 u,
      733 753 767 780 u`;

    const rect = (x1, y1, x2, y2, fill) => `<rect x="${x1}" y="${y1}" width="${x2 - x1}" height="${y2 - y1}" fill="${fill}"/>`;
    const frame = (x1, y1, x2, y2) => `<rect x="${x1 + 1}" y="${y1 + 1}" width="${x2 - x1 - 2}" height="${y2 - y1 - 2}" fill="none" stroke="#f00" stroke-width="2"/>`;
    const level = (y, h, fill) => `<rect x="0" y="${y}" width="4000" height="${h}" fill="${fill}"/>`;
    const dash = (x1, y1, x2, y2, c, len = 3) => `<path d="M${x1} ${y1}L${x2} ${y2}" stroke="${c}" stroke-dasharray="${len}"/>`;
    const entry = (x, y, c) => `<path d="M${x - 3} ${y - 1}h3v-3l4 4-4 4v-3h-3z" fill="${c}" stroke="#fff" stroke-width="2" paint-order="stroke"/>`;
    const exit = (x, y) => `<path d="M${x - 1} ${y}l4-4v8z" fill="#daa520" stroke="#fff" stroke-width="2" paint-order="stroke"/>`;
    const shift = (x) => `<path d="M${x - 5} 135h10l-5 5z" fill="#bbb"/>`;

    function drawCandles(data, x0) {
      return data.split(',').map((row, i) => {
        const [h, t, b, l, up] = row.trim().split(' ');
        const x = x0 + i * 4;
        let s = rect(x, +h, x + 1, +l + 1, '#000') + rect(x - 1, +t, x + 2, +b + 1, '#000');
        if (up) s += rect(x, +t + 1, x + 1, +b, '#fff');
        return s;
      }).join('');
    }

    function drawPlot(id, x0, back, candles, front) {
      document.getElementById(id).innerHTML =
        `<g transform="translate(${-x0},-135)">${back}${drawCandles(candles, x0)}${front}</g>`;
    }

    const font = `font-family="DejaVu Sans Condensed, DejaVu Sans, sans-serif" font-size="9"`;

    function drawPrices(id, prices, first, step, tags) {
      let s = '';
      for (const p of prices) {
        const y = Math.round(first + (prices[0] - p) * step) - 134;
        s += `<rect x="0" y="${y}" width="3" height="1"/><text x="5" y="${y + 4}" ${font}>0.${p}</text>`;
      }
      for (const [y, text, fill] of tags) {
        s += `<rect x="1" y="${y - 134}" width="41" height="11" fill="${fill}"/><text x="5" y="${y - 125}" fill="#fff" ${font}>${text}</text>`;
      }
      document.getElementById(id).innerHTML = s;
    }

    function drawTimes(id, labels) {
      document.getElementById(id).innerHTML = labels.map((t, i) =>
        `<rect x="${1 + i * 64}" y="0" width="1" height="3"/><text x="${i * 64}" y="12" ${font}>${t}</text>`).join('');
    }

    // AUDCAD,M15
    drawPlot('plotM15', 15,
      rect(15, 313, 563, 323, '#ff0') + rect(15, 368, 55, 402, '#ff0') + rect(683, 696, 891, 709, '#ff0') +
      rect(755, 782, 967, 798, '#ff0') + level(807, 1, '#c0c0c0'),
      candlesM15,
      level(388, 2, '#228b22') + level(798, 1, '#ff4500') +
      dash(15, 417, 156, 557, '#f00', 4) + exit(155, 557) +
      dash(735, 657, 803, 827, '#00f') + dash(783, 733, 803, 825, '#00f') +
      entry(732, 657, '#00f') + entry(781, 733, '#00f') + exit(804, 821) + exit(804, 829) +
      rect(780, 314, 787, 315, '#00f') + rect(732, 487, 739, 488, '#00f') +
      rect(732, 811, 739, 812, '#f00') + rect(780, 829, 787, 830, '#f00') +
      frame(686, 672, 748, 760) + frame(786, 767, 888, 923) +
      `<g shape-rendering="auto" style="filter:drop-shadow(2px 4px 2px #0006)"><path d="M613 884L816 802" stroke="#f00" stroke-width="3"/><path d="M831 796l-19 2 5 4-1 6z" fill="#f00"/></g>` +
      shift(858));
    drawPrices('priceM15',
      [96830, 96785, 96740, 96695, 96650, 96605, 96560, 96515, 96470, 96425, 96380, 96335, 96290, 96245, 96200,
       96155, 96110, 96065, 96020, 95975, 95930, 95885, 95840, 95795], 136, 0.767,
      [[383, '0.96500', '#228b22'], [793, '0.95966', '#ff4500'], [802, '0.95955', '#000']]);
    drawTimes('timeM15', ['12 Dec 2018', '12 Dec 13:00', '12 Dec 17:00', '12 Dec 21:00', '13 Dec 01:00', '13 Dec 05:00',
      '13 Dec 09:00', '13 Dec 13:00', '13 Dec 17:00', '13 Dec 21:00', '14 Dec 01:00', '14 Dec 05:00', '14 Dec 09:00', '14 Dec 13:00']);

    // AUDCAD,H1
    drawPlot('plotH1', 1134,
      rect(1371, 433, 1526, 447, '#ff0') + rect(1582, 415, 1670, 431, '#ff0') + rect(1655, 642, 1746, 657, '#ff0') +
      `<rect x="1230" y="761" width="2000" height="28" fill="#ff0"/>` + level(753, 1, '#c0c0c0') +
      level(417, 2, '#ff8c00') + rect(1582, 417, 1670, 419, '#ff80b0'),
      candlesH1,
      level(458, 2, '#228b22') + level(747, 1, '#ff4500') +
      dash(1284, 792, 1383, 475, '#00f') + dash(1288, 726, 1383, 475, '#00f') + dash(1316, 632, 1383, 473, '#00f') +
      dash(1458, 462, 1556, 480, '#f00') + dash(1486, 440, 1535, 577, '#f00') +
      dash(1682, 648, 1700, 765, '#00f') + dash(1693, 702, 1700, 769, '#00f') +
      frame(1369, 360, 1531, 462) + frame(1653, 617, 1731, 750) +
      entry(1283, 792, '#00f') + entry(1287, 726, '#00f') + entry(1315, 632, '#00f') +
      entry(1679, 647, '#00f') + entry(1691, 701, '#00f') + entry(1483, 437, '#f00') + entry(1455, 461, '#f00') +
      exit(1383, 473) + exit(1555, 480) + exit(1535, 577) + exit(1699, 763) + exit(1699, 769) +
      rect(1283, 475, 1294, 476, '#00f') + rect(1315, 474, 1322, 475, '#00f') + rect(1483, 577, 1490, 578, '#00f') +
      rect(1455, 622, 1462, 623, '#00f') + rect(1691, 407, 1698, 408, '#00f') + rect(1679, 529, 1686, 530, '#00f') +
      rect(1483, 337, 1490, 338, '#f00') + rect(1455, 480, 1462, 481, '#f00') + rect(1315, 848, 1322, 849, '#f00') +
      rect(1679, 756, 1686, 757, '#f00') + rect(1691, 769, 1698, 770, '#f00') +
      shift(1717));
    drawPrices('priceH1',
      [97045, 96980, 96915, 96850, 96785, 96720, 96655, 96590, 96530, 96465, 96400, 96335, 96270, 96205, 96140,
       96075, 96010, 95945, 95880, 95815, 95750, 95685, 95625], 165, 0.5393,
      [[453, '0.96500', '#228b22'], [742, '0.95966', '#ff4500'], [748, '0.95955', '#000']]);
    drawTimes('timeH1', ['6 Dec 2018', '7 Dec 05:00', '7 Dec 21:00', '10 Dec 13:00', '11 Dec 05:00', '11 Dec 21:00',
      '12 Dec 13:00', '13 Dec 05:00', '13 Dec 21:00', '14 Dec 13:00']);
  </script>
</body>
</html>
